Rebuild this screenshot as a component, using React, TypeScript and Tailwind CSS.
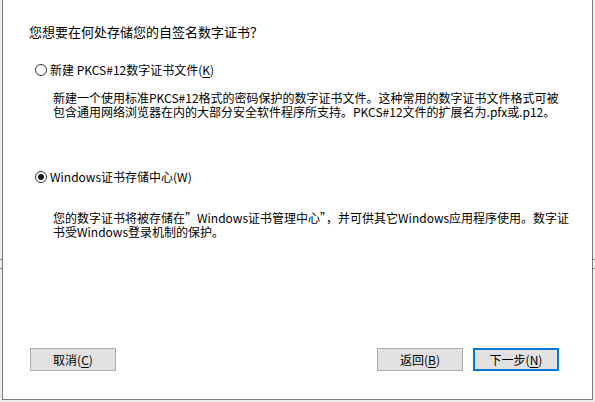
import React from "react";

// --- Radio dot ---
function Radio({ checked }: { checked: boolean }) {
  return (
    <span className="w-[12px] h-[12px] rounded-full border border-[#333333] bg-white flex items-center justify-center shrink-0">
      {checked && <span className="w-[6px] h-[6px] rounded-full bg-[#1a1a1a]" />}
    </span>
  );
}

// --- Dialog button ---
function Btn({
  label,
  hotkey,
  primary,
}: {
  label: string;
  hotkey: string;
  primary?: boolean;
}) {
  return (
    <button
      className={`w-[86px] h-[23px] bg-[#e1e1e1] text-[12px] leading-[14px] text-black flex items-center justify-center ${
        primary ? "border-2 border-[#0078d7]" : "border border-[#adadad]"
      }`}
    >
      {label}(<span className="underline underline-offset-2">{hotkey}</span>)
    </button>
  );
}

export default function App() {
  return (
    <div
      className="relative w-[595px] h-[402px] bg-[#ececec] overflow-hidden text-black"
      style={{ fontFamily: '"Noto Sans CJK SC", "Noto Sans", sans-serif' }}
    >
      {/* marks of the window behind */}
      <div className="absolute left-0 top-[259px] w-[2px] h-[1px] bg-[#8a8a8a]" />
      <div className="absolute left-0 top-[268px] w-[2px] h-[1px] bg-[#8a8a8a]" />
      <div className="absolute right-0 top-[259px] w-[2px] h-[1px] bg-[#8a8a8a]" />
      <div className="absolute right-0 top-[268px] w-[2px] h-[1px] bg-[#8a8a8a]" />

      <div className="ml-[2px] w-[591px] h-[400px] bg-white border-l border-r border-b border-[#7a7a7a] flex flex-col">
        <div className="pt-[24px] pl-[26px] flex flex-col">
          <div className="text-[13px] leading-[16px]">您想要在何处存储您的自签名数字证书？</div>

          <div className="mt-[22px] ml-[6px] h-[16px] flex items-center gap-[3px] text-[12px]">
            <Radio checked={false} />
            <span className="leading-[16px]">
              新建 PKCS#12数字证书文件(<span className="underline underline-offset-2">K</span>)
            </span>
          </div>

          <div className="mt-[13px] ml-[24px] text-[12px] leading-[14px] flex flex-col">
            <span>新建一个使用标准PKCS#12格式的密码保护的数字证书文件。这种常用的数字证书文件格式可被</span>
            <span>包含通用网络浏览器在内的大部分安全软件程序所支持。PKCS#12文件的扩展名为.pfx或.p12。</span>
          </div>

          <div className="mt-[50px] ml-[6px] h-[16px] flex items-center gap-[3px] text-[12px]">
            <Radio checked={true} />
            <span className="leading-[16px]">Windows证书存储中心(W)</span>
          </div>

          <div className="mt-[26px] ml-[24px] text-[12px] leading-[14px] flex flex-col">
            <span>您的数字证书将被存储在”Windows证书管理中心”，并可供其它Windows应用程序使用。数字证</span>
            <span>书受Windows登录机制的保护。</span>
          </div>
        </div>

        <div className="mt-auto pb-[28px] pl-[27px] pr-[33px] flex items-center">
          <Btn label="取消" hotkey="C" />
          <div className="flex-1" />
          <div className="flex gap-[10px]">
            <Btn label="返回" hotkey="B" />
            <Btn label="下一步" hotkey="N" primary />
          </div>
        </div>
      </div>
    </div>
  );
}
